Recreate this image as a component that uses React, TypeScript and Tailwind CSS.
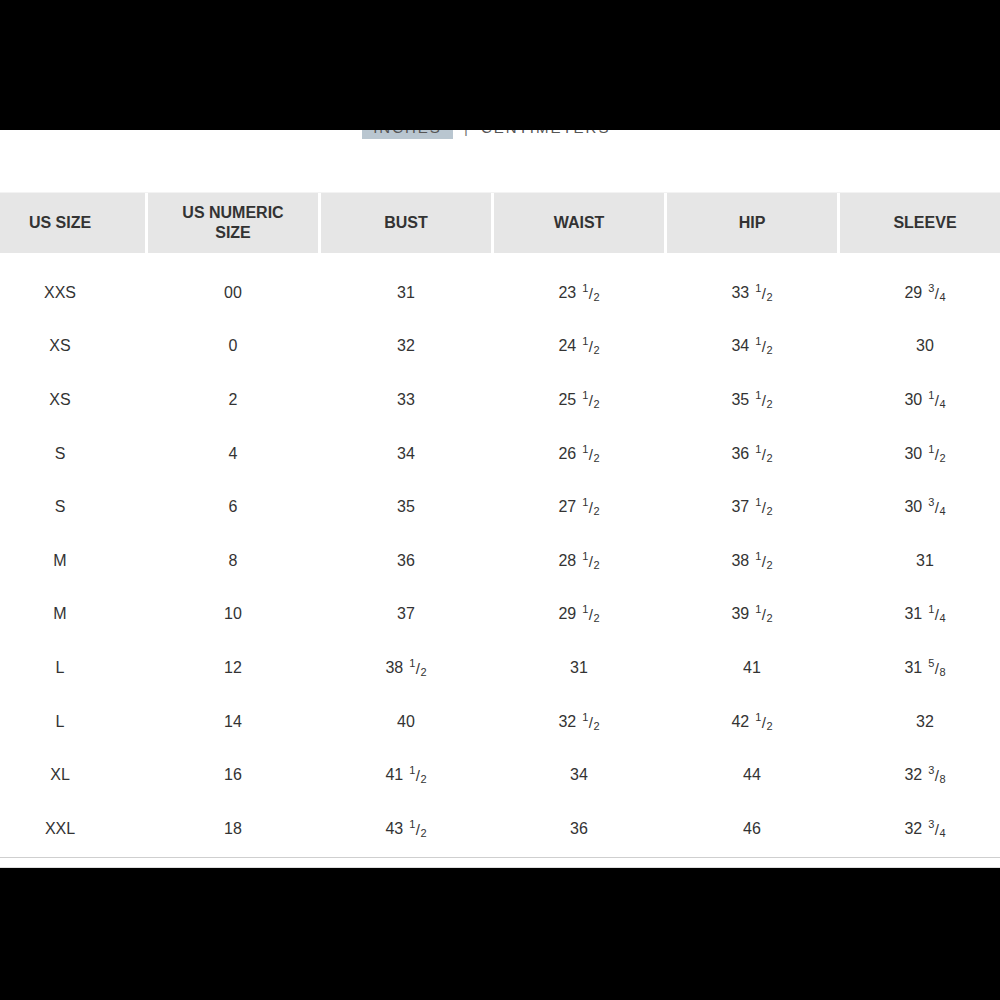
import React from "react";

type Cell = string;

const headers: string[][] = [
  ["US SIZE"],
  ["US NUMERIC", "SIZE"],
  ["BUST"],
  ["WAIST"],
  ["HIP"],
  ["SLEEVE"],
];

const rows: Cell[][] = [
  ["XXS", "00", "31", "23 1/2", "33 1/2", "29 3/4"],
  ["XS", "0", "32", "24 1/2", "34 1/2", "30"],
  ["XS", "2", "33", "25 1/2", "35 1/2", "30 1/4"],
  ["S", "4", "34", "26 1/2", "36 1/2", "30 1/2"],
  ["S", "6", "35", "27 1/2", "37 1/2", "30 3/4"],
  ["M", "8", "36", "28 1/2", "38 1/2", "31"],
  ["M", "10", "37", "29 1/2", "39 1/2", "31 1/4"],
  ["L", "12", "38 1/2", "31", "41", "31 5/8"],
  ["L", "14", "40", "32 1/2", "42 1/2", "32"],
  ["XL", "16", "41 1/2", "34", "44", "32 3/8"],
  ["XXL", "18", "43 1/2", "36", "46", "32 3/4"],
];

function Value({ v }: { v: string }) {
  const parts = v.split(" ");
  if (parts.length === 1) return <span>{v}</span>;
  const [num, den] = parts[1].split("/");
  return (
    <span className="inline-flex items-baseline">
      <span>{parts[0]}</span>
      <span className="ml-[6px] inline-flex items-baseline">
        <span className="relative top-[-6px] text-[11px] leading-none">{num}</span>
        <span className="relative top-[1px] mx-[0.5px] text-[15px] font-light leading-none">/</span>
        <span className="relative top-[3px] text-[11px] leading-none">{den}</span>
      </span>
    </span>
  );
}

export default function App() {
  return (
    <div
      className="relative flex h-[1000px] w-[1000px] flex-col overflow-hidden bg-white text-[#333]"
      style={{ fontFamily: '"Liberation Sans", Arial, sans-serif' }}
    >
      <div className="absolute left-0 top-0 z-10 h-[130px] w-full bg-black" />

      <div className="mt-[117px] flex h-[22px] items-center pl-[362px] text-[15px] tracking-[2px] text-[#555]">
        <div className="flex h-[22px] w-[91px] items-center justify-center bg-[#b9c6d0]">INCHES</div>
        <div className="ml-[11px] text-[#777]">|</div>
        <div className="ml-[11px]">CENTIMETERS</div>
      </div>

      <div className="mt-[53px] h-px w-full bg-[#f3f3f3]" />
      <div className="ml-[-25px] flex gap-[3px]">
        {headers.map((h, i) => (
          <div
            key={i}
            className="flex h-[60px] w-[170px] shrink-0 flex-col items-center justify-center bg-[#e6e6e6] text-[16px] font-bold leading-[20px] text-[#333]"
          >
            {h.map((line, j) => (
              <span key={j}>{line}</span>
            ))}
          </div>
        ))}
      </div>

      <div className="mt-[13px] flex flex-col">
        {rows.map((r, i) => (
          <div key={i} className="ml-[-25px] flex h-[53.6px] gap-[3px]">
            {r.map((c, j) => (
              <div
                key={j}
                className="flex w-[170px] shrink-0 items-center justify-center text-[16px] text-[#333]"
              >
                <Value v={c} />
              </div>
            ))}
          </div>
        ))}
      </div>

      <div className="mt-[1px] h-px w-full bg-[#cfcfcf]" />
      <div className="mt-[9px] h-px w-full bg-[#e0e0e0]" />
      <div className="flex-1 bg-black" />
    </div>
  );
}
